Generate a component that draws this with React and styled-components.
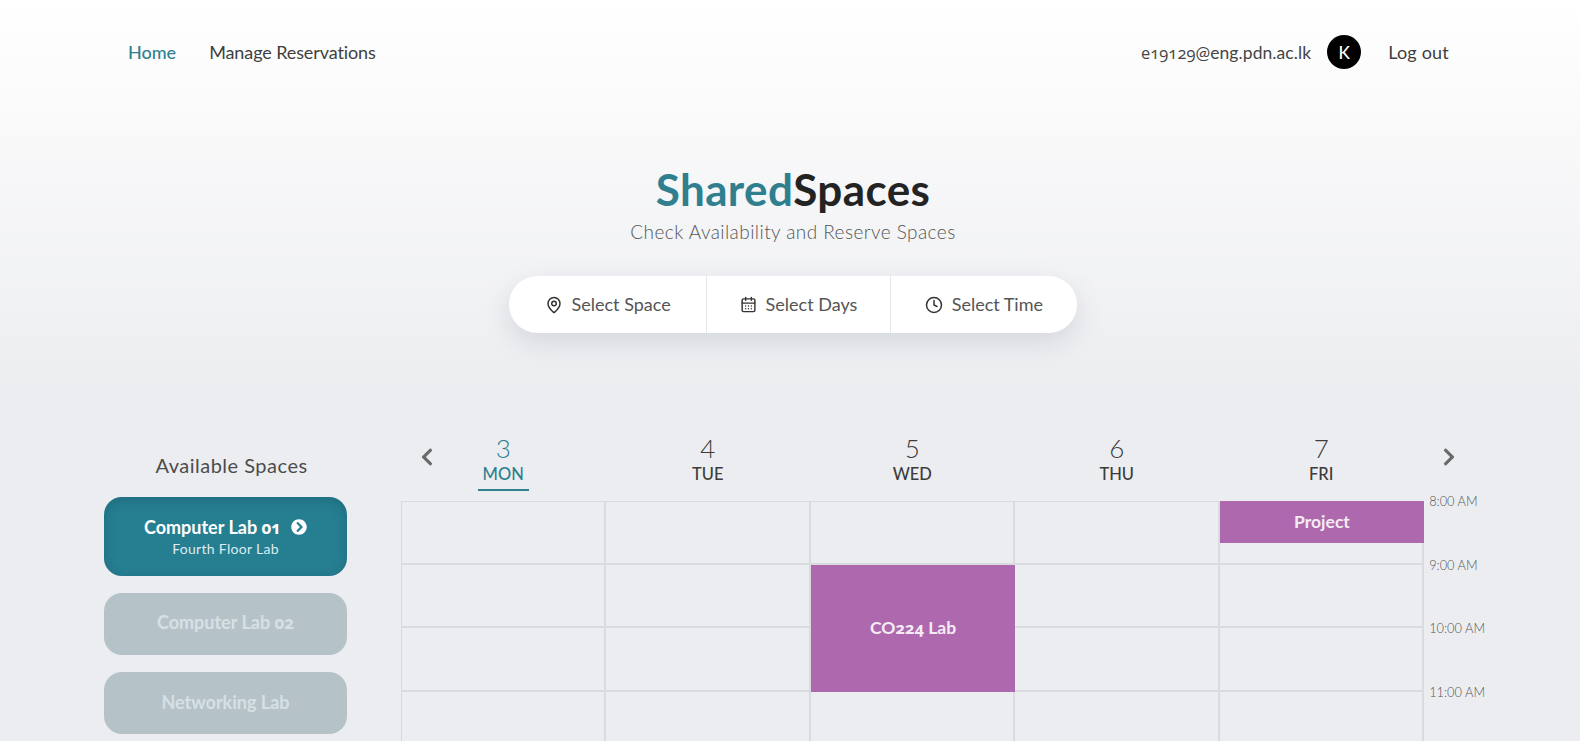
import React from "react";
import styled, { createGlobalStyle } from "styled-components";
import { MapPin, CalendarDays, Clock } from "lucide-react";
import { FaChevronLeft, FaChevronRight, FaChevronCircleRight } from "react-icons/fa";

const Global = createGlobalStyle`
  html, body { margin: 0; padding: 0; }
  body { font-family: "Lato", "Open Sans", sans-serif; color: #3c3c3c; background: #ecedf0; }
`;

const Page = styled.div`
  height: 741px;
  overflow: hidden;
  background: linear-gradient(180deg, #ffffff 0%, #ecedf0 400px);
`;

const Nav = styled.nav`
  height: 104px;
  padding: 0 131px 0 128px;
  display: flex;
  align-items: center;
  justify-content: space-between;
  font-size: 18px;
`;
const NavGroup = styled.div`
  display: flex;
  align-items: center;
`;
const NavLink = styled.a`
  color: ${(p) => (p.$active ? "#2f7f8f" : "#3f3f3f")};
  font-weight: ${(p) => (p.$active ? 500 : 400)};
  margin-left: ${(p) => p.$gap || 0}px;
  letter-spacing: ${(p) => p.$track || 0}px;
`;
const Email = styled.span`
  color: #454545;
  font-size: 17.5px;
  letter-spacing: 0.08px;
`;
const Num = styled.span`
  font-family: "Open Sans", sans-serif;
  font-variant-numeric: oldstyle-nums;
  font-feature-settings: "onum";
  font-size: 0.94em;
`;
const Avatar = styled.span`
  width: 34px;
  height: 34px;
  border-radius: 50%;
  background: #000;
  color: #fff;
  font-size: 17px;
  font-weight: 500;
  display: flex;
  align-items: center;
  justify-content: center;
  margin: 0 27px 0 16px;
`;

const Hero = styled.header`
  display: flex;
  flex-direction: column;
  align-items: center;
  padding: 59px 0 0 6px;
`;
const Title = styled.h1`
  margin: 0;
  font-size: 44px;
  line-height: 52px;
  font-weight: 700;
  letter-spacing: 0.4px;
  color: #232323;
`;
const TitleAccent = styled.span`
  color: #2f7f8f;
`;
const Subtitle = styled.p`
  margin: 4px 0 0;
  font-size: 19px;
  line-height: 26px;
  font-weight: 300;
  color: #555;
  letter-spacing: 0.44px;
`;
const Pill = styled.div`
  margin-top: 31px;
  height: 57px;
  width: 568px;
  border-radius: 29px;
  background: #fff;
  box-shadow: 0 10px 26px rgba(110, 120, 140, 0.2);
  display: flex;
  font-size: 18px;
  color: #555;
`;
const PillItem = styled.div`
  width: ${(p) => p.$w}px;
  display: flex;
  align-items: center;
  justify-content: center;
  gap: 9px;
  & + & { border-left: 1px solid #e6e7e9; }
  svg { color: #333; flex: none; }
`;
const PillLabel = styled.span`
  padding-bottom: 2px;
`;

const Main = styled.main`
  margin-top: 97px;
  display: flex;
  padding-left: 104px;
`;
const Sidebar = styled.aside`
  width: 243px;
  margin-right: 54px;
  padding-top: 22px;
`;
const SideTitle = styled.h2`
  margin: 0 0 19px;
  text-align: center;
  padding-left: 12px;
  font-size: 20px;
  line-height: 26px;
  font-weight: 400;
  color: #4c4c4c;
  letter-spacing: 0.5px;
`;
const SpaceCard = styled.button`
  display: flex;
  flex-direction: column;
  align-items: center;
  justify-content: center;
  width: 100%;
  height: ${(p) => (p.$active ? 79 : 62)}px;
  margin-bottom: 17px;
  padding: 0 0 ${(p) => (p.$active ? 0 : 3)}px;
  border: 0;
  border-radius: 18px;
  font-family: inherit;
  background: ${(p) => (p.$active ? "#267e91" : "#b5c3c9")};
  color: ${(p) => (p.$active ? "#fff" : "#d6e0e4")};
  box-shadow: ${(p) => (p.$active ? "inset 0 3px 12px rgba(15, 70, 90, 0.32)" : "none")};
`;
const CardName = styled.span`
  display: flex;
  align-items: center;
  gap: 10px;
  font-size: 18px;
  line-height: 22px;
  font-weight: 700;
`;
const CardSub = styled.span`
  font-size: 14px;
  line-height: 19px;
  letter-spacing: 0.3px;
  color: #dcecf0;
`;

const Calendar = styled.section`
  width: 1090px;
`;
const WeekHead = styled.div`
  display: grid;
  grid-template-columns: repeat(5, 204.5px) 60px;
  height: 71px;
  position: relative;
`;
const DayHead = styled.div`
  display: flex;
  flex-direction: column;
  align-items: center;
  color: ${(p) => (p.$active ? "#2f7f8f" : "#3c3c3c")};
`;
const DayNum = styled.span`
  font-size: 26px;
  line-height: 30px;
  font-weight: 300;
  margin-top: 3px;
`;
const DayName = styled.span`
  font-size: 16.5px;
  line-height: 20px;
  font-weight: 500;
  margin-top: 1px;
  padding: 0 5px 5px;
  border-bottom: 2.5px solid ${(p) => (p.$active ? "#2f7f8f" : "transparent")};
`;
const Arrow = styled.span`
  position: absolute;
  top: 17px;
  left: ${(p) => p.$left}px;
  color: #6a6a6a;
  font-size: 20px;
  line-height: 1;
  display: flex;
`;
const Grid = styled.div`
  display: grid;
  grid-template-columns: repeat(5, 204.45px) 70px;
  grid-auto-rows: 63.5px;
  border-left: 1px solid #d6d8db;
  width: max-content;
`;
const Cell = styled.div`
  grid-column: ${(p) => p.$col};
  grid-row: ${(p) => p.$row};
  border-right: 2px solid #d9dbde;
  border-bottom: 2px solid #d9dbde;
  border-top: ${(p) => (p.$row === 1 ? "1px solid #d9dbde" : "0")};
`;
const TimeLabel = styled.div`
  grid-column: 6;
  grid-row: ${(p) => p.$row};
  padding-left: 5px;
  font-size: 12.8px;
  line-height: 16px;
  font-weight: 300;
  color: #555;
  white-space: nowrap;
  transform: translateY(-8px);
`;
const Event = styled.div`
  grid-column: ${(p) => p.$col};
  grid-row: ${(p) => p.$row};
  height: ${(p) => p.$h || "auto"};
  padding-bottom: 2px;
  box-sizing: border-box;
  background: #ae68ae;
  color: #f4ecf4;
  font-size: 17.5px;
  font-weight: 700;
  display: flex;
  align-items: center;
  justify-content: center;
`;

const days = [
  { n: 3, d: "MON", active: true },
  { n: 4, d: "TUE" },
  { n: 5, d: "WED" },
  { n: 6, d: "THU" },
  { n: 7, d: "FRI" },
];
const hours = ["8:00 AM", "9:00 AM", "10:00 AM", "11:00 AM"];

export default function App() {
  return (
    <Page>
      <Global />
      <Nav>
        <NavGroup>
          <NavLink $active>Home</NavLink>
          <NavLink $gap={33} $track={-0.1}>Manage Reservations</NavLink>
        </NavGroup>
        <NavGroup>
          <Email><Num>e19129</Num>@eng.pdn.ac.lk</Email>
          <Avatar>K</Avatar>
          <NavLink $track={0.2}>Log out</NavLink>
        </NavGroup>
      </Nav>
      <Hero>
        <Title><TitleAccent>Shared</TitleAccent>Spaces</Title>
        <Subtitle>Check Availability and Reserve Spaces</Subtitle>
        <Pill>
          <PillItem $w={198}><MapPin size={18} strokeWidth={2} /><PillLabel>Select Space</PillLabel></PillItem>
          <PillItem $w={183}><CalendarDays size={17} strokeWidth={2} /><PillLabel>Select Days</PillLabel></PillItem>
          <PillItem $w={187}><Clock size={18} strokeWidth={2} /><PillLabel>Select Time</PillLabel></PillItem>
        </Pill>
      </Hero>
      <Main>
        <Sidebar>
          <SideTitle>Available Spaces</SideTitle>
          <SpaceCard $active>
            <CardName><span>Computer Lab <Num>01</Num></span><FaChevronCircleRight size={16} /></CardName>
            <CardSub>Fourth Floor Lab</CardSub>
          </SpaceCard>
          <SpaceCard><CardName><span>Computer Lab <Num>02</Num></span></CardName></SpaceCard>
          <SpaceCard><CardName>Networking Lab</CardName></SpaceCard>
        </Sidebar>
        <Calendar>
          <WeekHead>
            <Arrow $left={16}><FaChevronLeft /></Arrow>
            {days.map((x) => (
              <DayHead key={x.n} $active={x.active}>
                <DayNum>{x.n}</DayNum>
                <DayName $active={x.active}>{x.d}</DayName>
              </DayHead>
            ))}
            <Arrow $left={1038}><FaChevronRight /></Arrow>
          </WeekHead>
          <Grid>
            {[1, 2, 3, 4].flatMap((row) =>
              [1, 2, 3, 4, 5].map((col) => <Cell key={`${row}-${col}`} $col={col} $row={row} />)
            )}
            {hours.map((h, i) => (
              <TimeLabel key={h} $row={i + 1}>{h}</TimeLabel>
            ))}
            <Event $col={5} $row={1} $h="42px">Project</Event>
            <Event $col={3} $row="2 / span 2"><span>CO<Num>224</Num> Lab</span></Event>
          </Grid>
        </Calendar>
      </Main>
    </Page>
  );
}
